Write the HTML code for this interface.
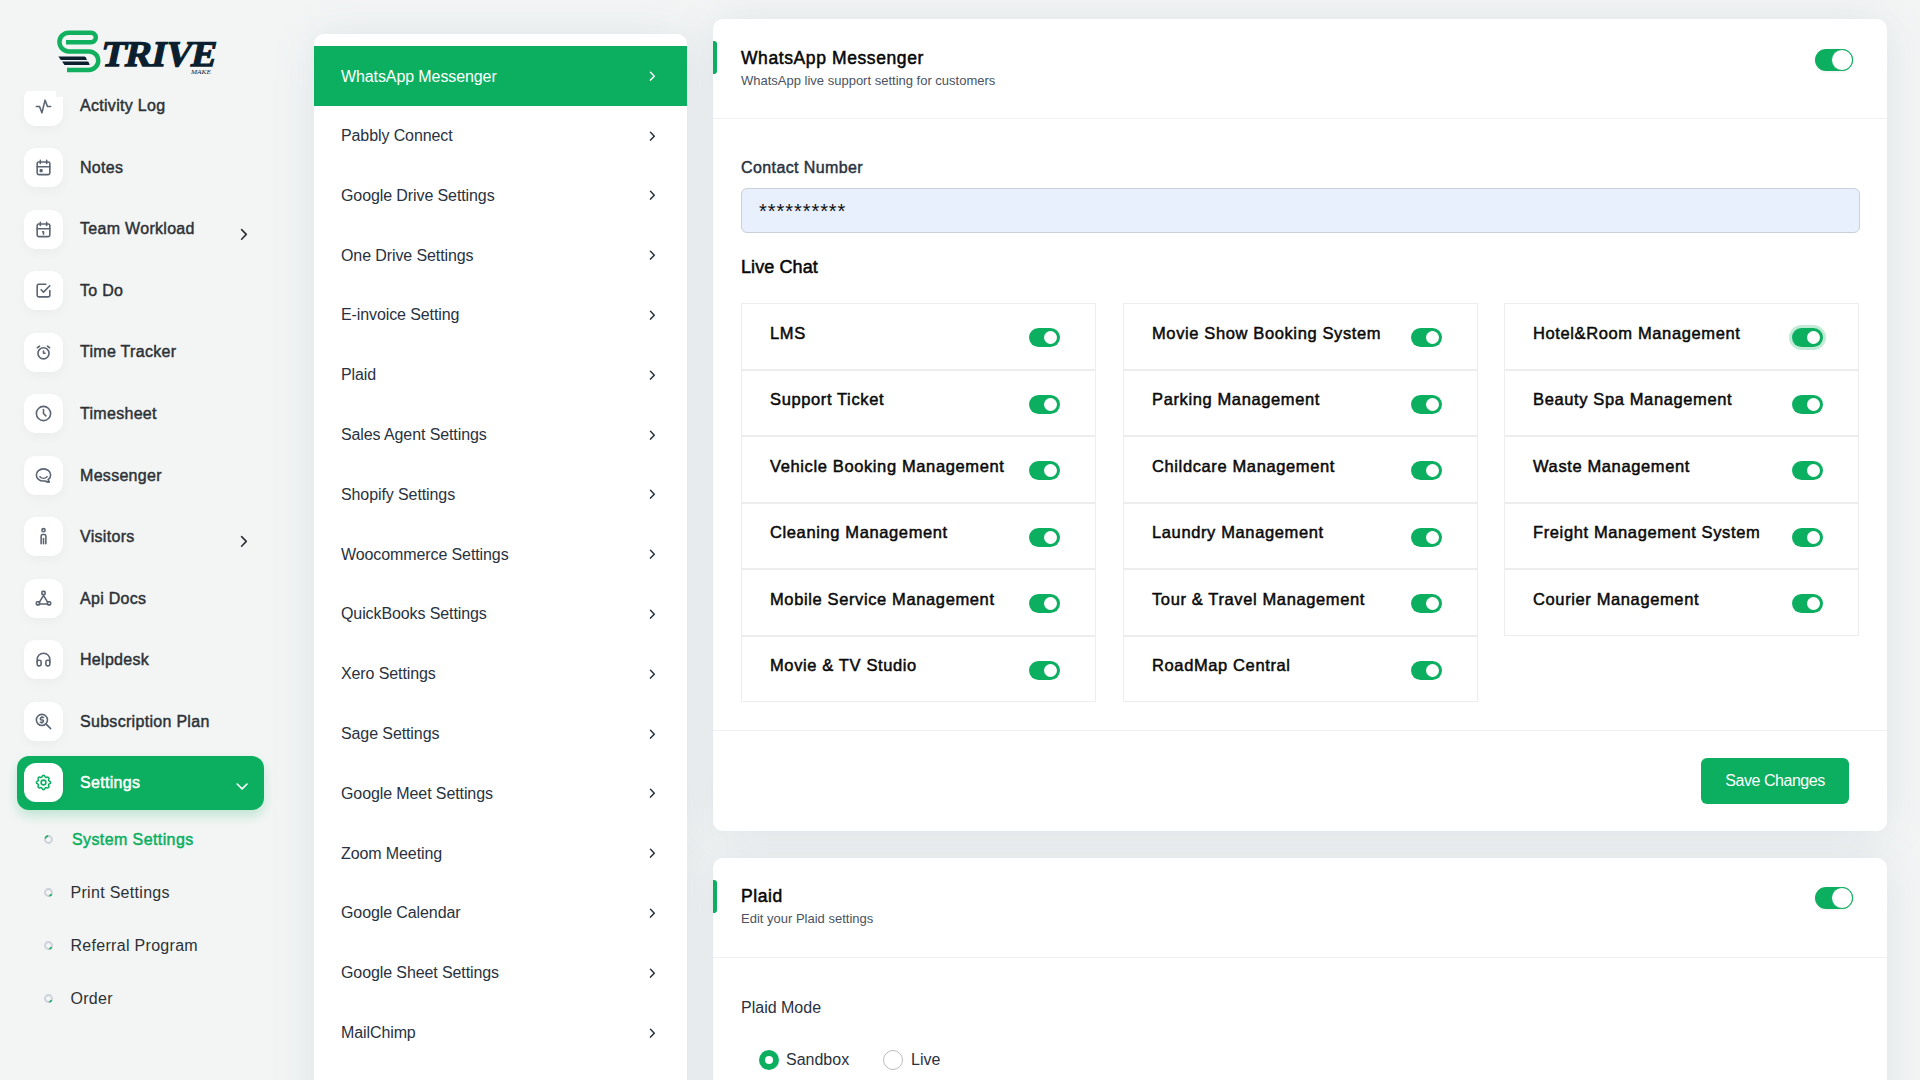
<!DOCTYPE html>
<html><head><meta charset="utf-8">
<style>
*{box-sizing:border-box;margin:0;padding:0}
html,body{width:1920px;height:1080px;overflow:hidden}
body{background:#f3f5f5;font-family:"Liberation Sans",sans-serif;color:#293240;position:relative}
.abs{position:absolute}
/* sidebar */
.sb-item{position:absolute;left:24px;height:40px;width:240px}
.sb-ico{position:absolute;left:0;top:0;width:39px;height:39px;background:#fff;border-radius:12px;box-shadow:0 4px 12px rgba(0,0,0,0.035)}
.sb-ico svg{position:absolute;left:10px;top:10px;width:19px;height:19px}
.sb-txt{position:absolute;left:56px;top:10px;font-size:16px;font-weight:400;-webkit-text-stroke:0.45px currentColor;letter-spacing:0.3px;line-height:20px;color:#2d3136;white-space:nowrap}
.sb-chev{position:absolute;left:217px;top:16px;width:7px;height:11px}
.sub{position:absolute;left:44px;height:20px;width:200px}
.sub .b{position:absolute;left:0;top:5px;width:9px;height:9px}
.sub .t{position:absolute;left:28px;top:0;font-size:16px;letter-spacing:0.3px;line-height:20px;white-space:nowrap;color:#2d3136}
/* nav card */
.nav{position:absolute;left:314px;top:34px;width:373px;height:1100px;background:#fff;border-radius:10px}
.shd{position:absolute;border-radius:10px;background:#f3f5f5;box-shadow:0 2px 45px rgba(95,115,140,0.13)}
.nv{position:absolute;left:0;width:373px;height:60px}
.nv .t{position:absolute;left:27px;top:20px;font-size:16px;letter-spacing:-0.1px;line-height:20px;white-space:nowrap;color:#293240}
.nv svg{position:absolute;left:335px;top:24.5px;width:7px;height:11px}
.nv.on{background:#0caf60}
.nv.on .t{color:#fff;top:21px}
/* cards */
.card{position:absolute;left:713px;width:1174px;background:#fff;border-radius:10px}
.bar{position:absolute;left:0;width:4px;background:#0caf60;border-radius:0 3px 3px 0}
.h5{position:absolute;left:28px;font-size:17.5px;font-weight:400;-webkit-text-stroke:0.5px currentColor;letter-spacing:0.6px;line-height:22px;color:#060606;white-space:nowrap}
.sm{position:absolute;left:28px;font-size:13px;line-height:16px;color:#4a5361;white-space:nowrap}
.hr{position:absolute;left:0;width:1174px;height:1px;background:#eff1f3}
.tg{position:absolute;width:38px;height:22px;border-radius:11px;background:#0caf60;box-shadow:0 1px 3px rgba(0,0,0,0.08)}
.tg::after{content:"";position:absolute;right:0;top:0;width:22px;height:22px;border-radius:50%;background:#fff;border:1px solid #0caf60;box-sizing:border-box}
.cell{position:absolute;width:355px;border:1px solid #ededed;background:#fff}
.cell .t{position:absolute;left:28px;top:19px;font-size:16.5px;font-weight:400;-webkit-text-stroke:0.5px currentColor;letter-spacing:0.62px;line-height:20px;color:#0a0a0a;white-space:nowrap}
.st{position:absolute;right:35px;top:23.5px;width:31px;height:19.5px;border-radius:9.75px;background:#0caf60}
.st::after{content:"";position:absolute;right:3px;top:3px;width:13.5px;height:13.5px;border-radius:50%;background:#fff}
</style></head>
<body>
<!-- SIDEBAR -->
<div class="sb-item" style="top:86.5px"><div class="sb-ico"><svg viewBox="0 0 24 24" fill="none" stroke="#5b6472" stroke-width="2" stroke-linecap="round" stroke-linejoin="round"><path d="M3 12h4l3 8l4 -16l3 8h4"/></svg></div><div class="sb-txt" style="top:9px">Activity Log</div></div>
<div class="sb-item" style="top:148.0px"><div class="sb-ico"><svg viewBox="0 0 24 24" fill="none" stroke="#5b6472" stroke-width="2" stroke-linecap="round" stroke-linejoin="round"><path d="M4 7a2 2 0 0 1 2 -2h12a2 2 0 0 1 2 2v12a2 2 0 0 1 -2 2h-12a2 2 0 0 1 -2 -2z"/><path d="M16 3v4M8 3v4M4 11h16"/><path d="M8 15h2v2h-2z"/></svg></div><div class="sb-txt">Notes</div></div>
<div class="sb-item" style="top:209.5px"><div class="sb-ico"><svg viewBox="0 0 24 24" fill="none" stroke="#5b6472" stroke-width="2" stroke-linecap="round" stroke-linejoin="round"><path d="M4 7a2 2 0 0 1 2 -2h12a2 2 0 0 1 2 2v12a2 2 0 0 1 -2 2h-12a2 2 0 0 1 -2 -2z"/><path d="M16 3v4M8 3v4M4 11h16M11 15h1M12 15v3"/></svg></div><div class="sb-txt" style="top:9px">Team Workload</div><svg style="position:absolute;left:216px;top:18px;display:block" width="8" height="13" viewBox="0 0 8 13"><path d="M1.6 1.6 L6.3 6.4 L1.6 11.2" fill="none" stroke="#2d3136" stroke-width="1.6" stroke-linecap="round" stroke-linejoin="round"/></svg></div>
<div class="sb-item" style="top:271.0px"><div class="sb-ico"><svg viewBox="0 0 24 24" fill="none" stroke="#5b6472" stroke-width="2" stroke-linecap="round" stroke-linejoin="round"><path d="M9 11l3 3l8 -8"/><path d="M20 12v6a2 2 0 0 1 -2 2h-12a2 2 0 0 1 -2 -2v-12a2 2 0 0 1 2 -2h9"/></svg></div><div class="sb-txt">To Do</div></div>
<div class="sb-item" style="top:332.5px"><div class="sb-ico"><svg viewBox="0 0 24 24" fill="none" stroke="#5b6472" stroke-width="2" stroke-linecap="round" stroke-linejoin="round"><path d="M5 13a7 7 0 1 0 14 0a7 7 0 1 0 -14 0"/><path d="M12 10v3h2M7 4l-2.75 2M17 4l2.75 2"/></svg></div><div class="sb-txt" style="top:9px">Time Tracker</div></div>
<div class="sb-item" style="top:394.0px"><div class="sb-ico"><svg viewBox="0 0 24 24" fill="none" stroke="#5b6472" stroke-width="2" stroke-linecap="round" stroke-linejoin="round"><path d="M3 12a9 9 0 1 0 18 0a9 9 0 0 0 -18 0"/><path d="M12 7v5l3 3"/></svg></div><div class="sb-txt">Timesheet</div></div>
<div class="sb-item" style="top:455.5px"><div class="sb-ico"><svg viewBox="0 0 24 24" fill="none" stroke="#5b6472" stroke-width="2" stroke-linecap="round" stroke-linejoin="round"><path d="M17.802 17.292s.077 -.055 .2 -.149c1.843 -1.425 3 -3.49 3 -5.789c0 -4.286 -4.03 -7.764 -9 -7.764c-4.97 0 -9 3.478 -9 7.764c0 4.288 4.03 7.646 9 7.646c.424 0 1.12 -.028 2.088 -.084c1.262 .82 3.104 1.493 4.716 1.493c.499 0 .734 -.41 .414 -.828c-.486 -.596 -1.156 -1.551 -1.416 -2.29z"/><path d="M7.5 13.5c2.5 2.5 6.5 2.5 9 0"/></svg></div><div class="sb-txt">Messenger</div></div>
<div class="sb-item" style="top:517.0px"><div class="sb-ico"><svg viewBox="0 0 24 24" fill="none" stroke="#5b6472" stroke-width="2" stroke-linecap="round" stroke-linejoin="round"><path d="M10 4a2 2 0 1 0 4 0a2 2 0 1 0 -4 0"/><path d="M9 21v-9.5a2 2 0 0 1 2 -2h2a2 2 0 0 1 2 2v9.5M12 14.5v6.5"/></svg></div><div class="sb-txt">Visitors</div><svg style="position:absolute;left:216px;top:18px;display:block" width="8" height="13" viewBox="0 0 8 13"><path d="M1.6 1.6 L6.3 6.4 L1.6 11.2" fill="none" stroke="#2d3136" stroke-width="1.6" stroke-linecap="round" stroke-linejoin="round"/></svg></div>
<div class="sb-item" style="top:578.5px"><div class="sb-ico"><svg viewBox="0 0 24 24" fill="none" stroke="#5b6472" stroke-width="2" stroke-linecap="round" stroke-linejoin="round"><path d="M10 4a1 1 0 0 1 1 -1h2a1 1 0 0 1 1 1v2a1 1 0 0 1 -1 1h-2a1 1 0 0 1 -1 -1z"/><path d="M3 17a1 1 0 0 1 1 -1h2a1 1 0 0 1 1 1v2a1 1 0 0 1 -1 1h-2a1 1 0 0 1 -1 -1z"/><path d="M17 17a1 1 0 0 1 1 -1h2a1 1 0 0 1 1 1v2a1 1 0 0 1 -1 1h-2a1 1 0 0 1 -1 -1z"/><path d="M6.5 17.1l5.5 -9.1M17.5 17.1l-5.5 -9.1M7 19h10"/></svg></div><div class="sb-txt">Api Docs</div></div>
<div class="sb-item" style="top:640.0px"><div class="sb-ico"><svg viewBox="0 0 24 24" fill="none" stroke="#5b6472" stroke-width="2" stroke-linecap="round" stroke-linejoin="round"><path d="M4 15a2 2 0 0 1 2 -2h1a2 2 0 0 1 2 2v3a2 2 0 0 1 -2 2h-1a2 2 0 0 1 -2 -2z"/><path d="M15 15a2 2 0 0 1 2 -2h1a2 2 0 0 1 2 2v3a2 2 0 0 1 -2 2h-1a2 2 0 0 1 -2 -2z"/><path d="M4 15v-3a8 8 0 0 1 16 0v3"/></svg></div><div class="sb-txt">Helpdesk</div></div>
<div class="sb-item" style="top:701.5px"><div class="sb-ico"><svg viewBox="0 0 24 24" fill="none" stroke="#5b6472" stroke-width="2" stroke-linecap="round" stroke-linejoin="round"><path d="M3 10a7 7 0 1 0 14 0a7 7 0 1 0 -14 0"/><path d="M21 21l-6 -6M12 7h-2.5a1.5 1.5 0 0 0 0 3h1a1.5 1.5 0 0 1 0 3h-2.5M10 13v1m0 -8v1"/></svg></div><div class="sb-txt">Subscription Plan</div></div>
<div class="abs" style="left:0;top:0;width:270px;height:91px;background:#f3f5f5"></div><div class="abs" style="left:56px;top:80px;width:12px;height:16.5px;background:#f3f5f5"></div>
<svg class="abs" style="left:50px;top:25px" width="180" height="55" viewBox="50 25 180 55">
<path d="M66 42.3 L91 42.3 A4.8 4.8 0 0 0 91 32.7 L68.8 32.7 A9.35 9.35 0 0 0 68.8 51.4 L89 51.4 A9.25 9.25 0 0 1 89 69.9 L67 69.9" fill="none" stroke="#10b05e" stroke-width="4.5" stroke-linecap="butt" stroke-linejoin="round"/>
<path d="M58.4 56.6 L84.5 56.6 Q86 56.6 86.9 59.9 L60.8 59.9 Z M62.1 61.5 L87.5 61.5 Q89 61.5 89.6 65 L64.5 65 Z" fill="#0b1f2e"/>
<text x="101" y="66" font-family="Liberation Serif" font-weight="700" font-size="36" fill="#0b1f2e" stroke="#0b1f2e" stroke-width="1.3" textLength="114" lengthAdjust="spacingAndGlyphs" transform="translate(13 0) skewX(-12)">TRIVE</text>
<text x="191" y="73.5" font-family="Liberation Serif" font-style="italic" font-size="7" fill="#0b2135" textLength="20" lengthAdjust="spacingAndGlyphs">MAKE</text>
</svg>
<div class="abs" style="left:17px;top:756px;width:247px;height:54px;border-radius:12px;background:#0caf60;box-shadow:0 6px 12px rgba(12,175,96,0.22)"></div>
<div class="sb-item" style="top:763px"><div class="sb-ico"><svg viewBox="0 0 24 24" fill="none" stroke="#0caf60" stroke-width="2" stroke-linecap="round" stroke-linejoin="round"><path d="M10.325 4.317c.426 -1.756 2.924 -1.756 3.35 0a1.724 1.724 0 0 0 2.573 1.066c1.543 -.94 3.31 .826 2.37 2.37a1.724 1.724 0 0 0 1.065 2.572c1.756 .426 1.756 2.924 0 3.35a1.724 1.724 0 0 0 -1.066 2.573c.94 1.543 -.826 3.31 -2.37 2.37a1.724 1.724 0 0 0 -2.572 1.065c-.426 1.756 -2.924 1.756 -3.35 0a1.724 1.724 0 0 0 -2.573 -1.066c-1.543 .94 -3.31 -.826 -2.37 -2.37a1.724 1.724 0 0 0 -1.065 -2.572c-1.756 -.426 -1.756 -2.924 0 -3.35a1.724 1.724 0 0 0 1.066 -2.573c-.94 -1.543 .826 -3.31 2.37 -2.37c1 .608 2.296 .07 2.572 -1.065z"/><path d="M9 12a3 3 0 1 0 6 0a3 3 0 0 0 -6 0"/></svg></div><div class="sb-txt" style="color:#fff">Settings</div><svg style="position:absolute;left:212px;top:20px;display:block" width="13" height="8" viewBox="0 0 13 8"><path d="M1.2 1.0 L6.1 5.9 L11 1.0" fill="none" stroke="#fff" stroke-width="1.6" stroke-linecap="round" stroke-linejoin="round"/></svg></div>
<div class="sub" style="top:829.5px"><svg class="b" viewBox="0 0 9 9"><circle cx="4.5" cy="4.5" r="3.5" fill="none" stroke="#cbd0d9" stroke-width="1.8"/><path d="M1.2 3.4 A3.6 3.6 0 0 1 4.2 0.9" fill="none" stroke="#0caf60" stroke-width="1.6"/></svg><div class="t" style="color:#0caf60;-webkit-text-stroke:0.5px currentColor;letter-spacing:0.4px">System Settings</div></div>
<div class="sub" style="top:882.5px"><svg class="b" viewBox="0 0 9 9"><circle cx="4.5" cy="4.5" r="3.5" fill="none" stroke="#cbd0d9" stroke-width="1.8"/><path d="M7.6 6.2 A3.6 3.6 0 0 1 5.3 8" fill="none" stroke="#0caf60" stroke-width="1.6"/></svg><div class="t" style="left:26.5px">Print Settings</div></div>
<div class="sub" style="top:936px"><svg class="b" viewBox="0 0 9 9"><circle cx="4.5" cy="4.5" r="3.5" fill="none" stroke="#cbd0d9" stroke-width="1.8"/><path d="M7.6 6.2 A3.6 3.6 0 0 1 5.3 8" fill="none" stroke="#0caf60" stroke-width="1.6"/></svg><div class="t" style="left:26.5px">Referral Program</div></div>
<div class="sub" style="top:989px"><svg class="b" viewBox="0 0 9 9"><circle cx="4.5" cy="4.5" r="3.5" fill="none" stroke="#cbd0d9" stroke-width="1.8"/><path d="M7.6 6.2 A3.6 3.6 0 0 1 5.3 8" fill="none" stroke="#0caf60" stroke-width="1.6"/></svg><div class="t" style="left:26.5px">Order</div></div>
<!-- NAV -->
<div class="shd" style="left:314px;top:34px;width:373px;height:1100px"></div>
<div class="shd" style="left:713px;top:19px;width:1174px;height:812px"></div>
<div class="shd" style="left:713px;top:858px;width:1174px;height:300px"></div>
<div class="nav"><div class="nv on" style="top:12.0px"><div class="t">WhatsApp Messenger</div><svg viewBox="0 0 7 11"><path d="M1.5 1.3 L5.3 5.2 L1.5 9.1" fill="none" stroke="#fff" stroke-width="1.5" stroke-linecap="round" stroke-linejoin="round"/></svg></div>
<div class="nv" style="top:72.0px"><div class="t">Pabbly Connect</div><svg viewBox="0 0 7 11"><path d="M1.5 1.3 L5.3 5.2 L1.5 9.1" fill="none" stroke="#293240" stroke-width="1.5" stroke-linecap="round" stroke-linejoin="round"/></svg></div>
<div class="nv" style="top:131.79999999999998px"><div class="t">Google Drive Settings</div><svg viewBox="0 0 7 11"><path d="M1.5 1.3 L5.3 5.2 L1.5 9.1" fill="none" stroke="#293240" stroke-width="1.5" stroke-linecap="round" stroke-linejoin="round"/></svg></div>
<div class="nv" style="top:191.59999999999997px"><div class="t">One Drive Settings</div><svg viewBox="0 0 7 11"><path d="M1.5 1.3 L5.3 5.2 L1.5 9.1" fill="none" stroke="#293240" stroke-width="1.5" stroke-linecap="round" stroke-linejoin="round"/></svg></div>
<div class="nv" style="top:251.39999999999998px"><div class="t">E-invoice Setting</div><svg viewBox="0 0 7 11"><path d="M1.5 1.3 L5.3 5.2 L1.5 9.1" fill="none" stroke="#293240" stroke-width="1.5" stroke-linecap="round" stroke-linejoin="round"/></svg></div>
<div class="nv" style="top:311.2px"><div class="t">Plaid</div><svg viewBox="0 0 7 11"><path d="M1.5 1.3 L5.3 5.2 L1.5 9.1" fill="none" stroke="#293240" stroke-width="1.5" stroke-linecap="round" stroke-linejoin="round"/></svg></div>
<div class="nv" style="top:370.99999999999994px"><div class="t">Sales Agent Settings</div><svg viewBox="0 0 7 11"><path d="M1.5 1.3 L5.3 5.2 L1.5 9.1" fill="none" stroke="#293240" stroke-width="1.5" stroke-linecap="round" stroke-linejoin="round"/></svg></div>
<div class="nv" style="top:430.79999999999995px"><div class="t">Shopify Settings</div><svg viewBox="0 0 7 11"><path d="M1.5 1.3 L5.3 5.2 L1.5 9.1" fill="none" stroke="#293240" stroke-width="1.5" stroke-linecap="round" stroke-linejoin="round"/></svg></div>
<div class="nv" style="top:490.59999999999997px"><div class="t">Woocommerce Settings</div><svg viewBox="0 0 7 11"><path d="M1.5 1.3 L5.3 5.2 L1.5 9.1" fill="none" stroke="#293240" stroke-width="1.5" stroke-linecap="round" stroke-linejoin="round"/></svg></div>
<div class="nv" style="top:550.4px"><div class="t">QuickBooks Settings</div><svg viewBox="0 0 7 11"><path d="M1.5 1.3 L5.3 5.2 L1.5 9.1" fill="none" stroke="#293240" stroke-width="1.5" stroke-linecap="round" stroke-linejoin="round"/></svg></div>
<div class="nv" style="top:610.2px"><div class="t">Xero Settings</div><svg viewBox="0 0 7 11"><path d="M1.5 1.3 L5.3 5.2 L1.5 9.1" fill="none" stroke="#293240" stroke-width="1.5" stroke-linecap="round" stroke-linejoin="round"/></svg></div>
<div class="nv" style="top:670.0px"><div class="t">Sage Settings</div><svg viewBox="0 0 7 11"><path d="M1.5 1.3 L5.3 5.2 L1.5 9.1" fill="none" stroke="#293240" stroke-width="1.5" stroke-linecap="round" stroke-linejoin="round"/></svg></div>
<div class="nv" style="top:729.8px"><div class="t">Google Meet Settings</div><svg viewBox="0 0 7 11"><path d="M1.5 1.3 L5.3 5.2 L1.5 9.1" fill="none" stroke="#293240" stroke-width="1.5" stroke-linecap="round" stroke-linejoin="round"/></svg></div>
<div class="nv" style="top:789.6px"><div class="t">Zoom Meeting</div><svg viewBox="0 0 7 11"><path d="M1.5 1.3 L5.3 5.2 L1.5 9.1" fill="none" stroke="#293240" stroke-width="1.5" stroke-linecap="round" stroke-linejoin="round"/></svg></div>
<div class="nv" style="top:849.4px"><div class="t">Google Calendar</div><svg viewBox="0 0 7 11"><path d="M1.5 1.3 L5.3 5.2 L1.5 9.1" fill="none" stroke="#293240" stroke-width="1.5" stroke-linecap="round" stroke-linejoin="round"/></svg></div>
<div class="nv" style="top:909.2px"><div class="t">Google Sheet Settings</div><svg viewBox="0 0 7 11"><path d="M1.5 1.3 L5.3 5.2 L1.5 9.1" fill="none" stroke="#293240" stroke-width="1.5" stroke-linecap="round" stroke-linejoin="round"/></svg></div>
<div class="nv" style="top:969.0px"><div class="t">MailChimp</div><svg viewBox="0 0 7 11"><path d="M1.5 1.3 L5.3 5.2 L1.5 9.1" fill="none" stroke="#293240" stroke-width="1.5" stroke-linecap="round" stroke-linejoin="round"/></svg></div>
<div class="nv" style="top:1028.8px"><div class="t">Stripe</div><svg viewBox="0 0 7 11"><path d="M1.5 1.3 L5.3 5.2 L1.5 9.1" fill="none" stroke="#293240" stroke-width="1.5" stroke-linecap="round" stroke-linejoin="round"/></svg></div></div>
<!-- CARD 1 -->
<div class="card" style="top:19px;height:812px" ><div class="bar" style="top:22px;height:33px"></div>
<div class="h5" style="top:28px">WhatsApp Messenger</div>
<div class="sm" style="top:54px">WhatsApp live support setting for customers</div>
<div class="tg" style="left:1102px;top:30px"></div>
<div class="hr" style="top:99px"></div>
<div class="abs" style="left:28px;top:139px;font-size:16px;font-weight:400;-webkit-text-stroke:0.45px currentColor;line-height:20px;color:#293240;letter-spacing:0.4px">Contact Number</div>
<div class="abs" style="left:28px;top:169px;width:1119px;height:45px;background:#e8f0fe;border:1px solid #c9d0da;border-radius:6px"></div>
<div class="abs" style="left:46px;top:182px;font-size:20px;line-height:20px;color:#111;letter-spacing:0.95px">**********</div>
<div class="abs" style="left:28px;top:237px;font-size:18px;font-weight:400;-webkit-text-stroke:0.5px currentColor;line-height:22px;color:#060606;letter-spacing:0.1px">Live Chat</div>
<div class="cell" style="left:28px;top:284px;height:67px"><div class="t">LMS</div><div class="st" style=""></div></div>
<div class="cell" style="left:28px;top:351px;height:66px"><div class="t" style="top:18px">Support Ticket</div><div class="st" style=""></div></div>
<div class="cell" style="left:28px;top:417px;height:67px"><div class="t">Vehicle Booking Management</div><div class="st" style=""></div></div>
<div class="cell" style="left:28px;top:484px;height:66px"><div class="t" style="top:18px">Cleaning Management</div><div class="st" style=""></div></div>
<div class="cell" style="left:28px;top:550px;height:67px"><div class="t">Mobile Service Management</div><div class="st" style=""></div></div>
<div class="cell" style="left:28px;top:617px;height:66px"><div class="t" style="top:18px">Movie &amp; TV Studio</div><div class="st" style=""></div></div>
<div class="cell" style="left:410px;top:284px;height:67px"><div class="t">Movie Show Booking System</div><div class="st" style=""></div></div>
<div class="cell" style="left:410px;top:351px;height:66px"><div class="t" style="top:18px">Parking Management</div><div class="st" style=""></div></div>
<div class="cell" style="left:410px;top:417px;height:67px"><div class="t">Childcare Management</div><div class="st" style=""></div></div>
<div class="cell" style="left:410px;top:484px;height:66px"><div class="t" style="top:18px">Laundry Management</div><div class="st" style=""></div></div>
<div class="cell" style="left:410px;top:550px;height:67px"><div class="t">Tour &amp; Travel Management</div><div class="st" style=""></div></div>
<div class="cell" style="left:410px;top:617px;height:66px"><div class="t" style="top:18px">RoadMap Central</div><div class="st" style=""></div></div>
<div class="cell" style="left:791px;top:284px;height:67px"><div class="t">Hotel&amp;Room Management</div><div class="st" style="box-shadow:0 0 0 3px rgba(12,175,96,0.25);"></div></div>
<div class="cell" style="left:791px;top:351px;height:66px"><div class="t" style="top:18px">Beauty Spa Management</div><div class="st" style=""></div></div>
<div class="cell" style="left:791px;top:417px;height:67px"><div class="t">Waste Management</div><div class="st" style=""></div></div>
<div class="cell" style="left:791px;top:484px;height:66px"><div class="t" style="top:18px">Freight Management System</div><div class="st" style=""></div></div>
<div class="cell" style="left:791px;top:550px;height:67px"><div class="t">Courier Management</div><div class="st" style=""></div></div>
<div class="hr" style="top:711px"></div>
<div class="abs" style="left:988px;top:739px;width:148px;height:46px;border-radius:6px;background:#0caf60;color:#fff;font-size:16px;letter-spacing:-0.45px;line-height:46px;text-align:center">Save Changes</div>
</div>
<!-- CARD 2 -->
<div class="card" style="top:858px;height:300px" ><div class="bar" style="top:22px;height:33px"></div>
<div class="h5" style="top:27px">Plaid</div>
<div class="sm" style="top:53px">Edit your Plaid settings</div>
<div class="tg" style="left:1102px;top:29px"></div>
<div class="hr" style="top:99px"></div>
<div class="abs" style="left:28px;top:140px;font-size:16px;line-height:20px;color:#293240">Plaid Mode</div>
<div class="abs" style="left:46px;top:192px;width:20px;height:20px;border-radius:50%;background:#0caf60"><div class="abs" style="left:6px;top:6px;width:8px;height:8px;border-radius:50%;background:#fff"></div></div>
<div class="abs" style="left:73px;top:192px;font-size:16px;line-height:20px;color:#293240">Sandbox</div>
<div class="abs" style="left:170px;top:192px;width:20px;height:20px;border-radius:50%;background:#fff;border:1px solid #b9bdc2"></div>
<div class="abs" style="left:198px;top:192px;font-size:16px;line-height:20px;color:#293240">Live</div>
</div>
</body></html>
